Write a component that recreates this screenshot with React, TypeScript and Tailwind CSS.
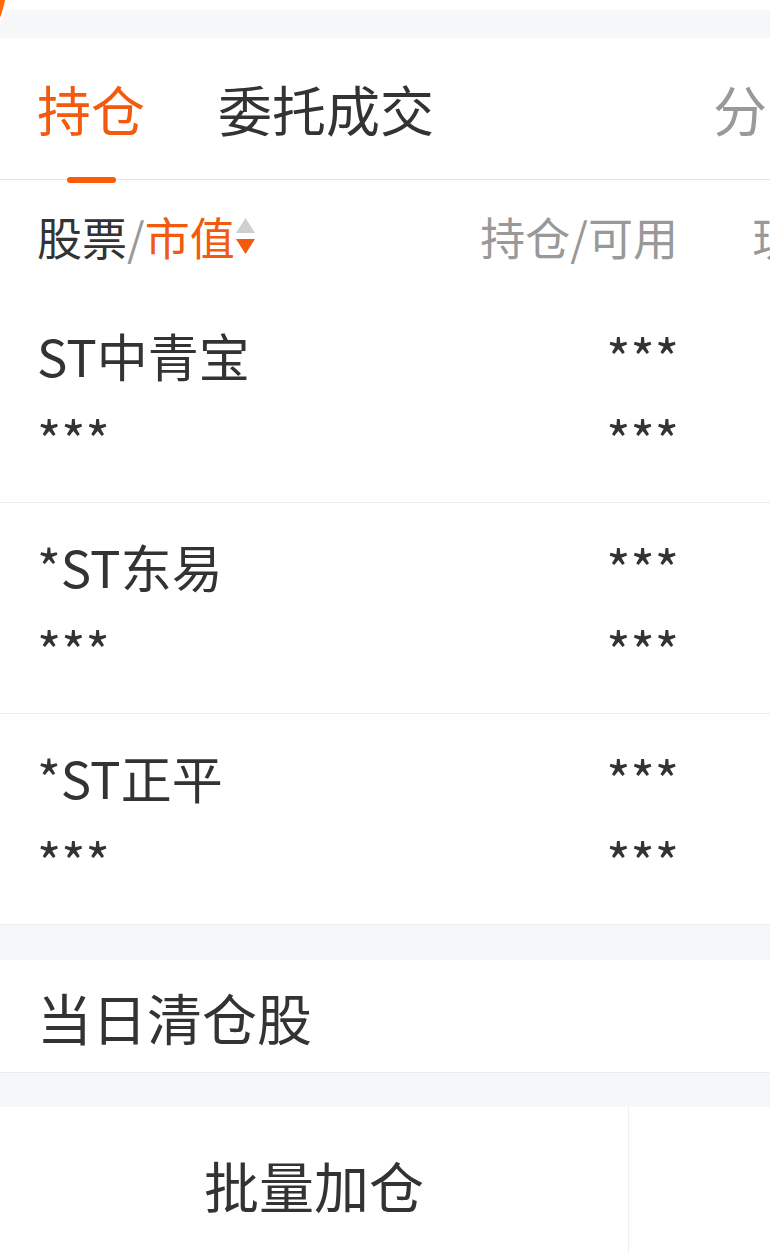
import React from 'react'

const rows = [
  { name: 'ST中青宝' },
  { name: '*ST东易' },
  { name: '*ST正平' },
]

const font = { fontFamily: '"Noto Sans CJK SC", "Noto Sans", sans-serif' }

export default function App() {
  return (
    <div className="relative w-[770px] h-[1253px] overflow-hidden bg-white text-[#333]" style={font}>
      {/* top strip */}
      <div className="h-[10px] bg-white" />
      <div className="h-[28px] bg-[#f6f7f9]" />
      <div className="absolute left-[-206px] top-[-128px] w-[216px] h-[216px] rounded-full bg-[#ff6a0a] border-[3px] border-white" />

      {/* tabs */}
      <div className="relative h-[142px] border-b border-[#e3e3e3] flex items-center pl-[37px] whitespace-nowrap">
        <div className="relative shrink-0 text-[54px] leading-none text-[#f25a0e]">
          持仓
          <span className="absolute left-[30px] top-[95px] w-[49px] h-[6px] rounded-full bg-[#ff5a0a]" />
        </div>
        <div className="shrink-0 ml-[73px] text-[54px] leading-none">委托成交</div>
        <div className="shrink-0 ml-[279px] text-[54px] leading-none text-[#999]">分时</div>
      </div>

      {/* column header */}
      <div className="h-[112px] flex items-center pl-[37px] whitespace-nowrap text-[45px] leading-none">
        <div className="w-[441px] shrink-0 flex items-center">
          <span>股票</span>
          <span className="text-[#999]">/</span>
          <span className="text-[#f25a0e]">市值</span>
          <span className="ml-[1px] shrink-0 flex flex-col gap-[6px]">
            <svg className="shrink-0" width="19" height="15" viewBox="0 0 19 15"><path d="M9.5 0L19 15H0z" fill="#cfcfcf" /></svg>
            <svg className="shrink-0" width="19" height="15" viewBox="0 0 19 15"><path d="M0 0h19L9.5 15z" fill="#f25a0e" /></svg>
          </span>
        </div>
        <div className="w-[200px] shrink-0 text-right text-[#999]">持仓/可用</div>
        <div className="shrink-0 ml-[74px] text-[#999]">现价/成本</div>
      </div>

      {/* holdings */}
      {rows.map((r, i) => (
        <div key={i} className="h-[211px] border-b border-[#ececec] flex pl-[37px] pt-[38px] whitespace-nowrap">
          <div className="w-[441px] shrink-0 flex flex-col">
            <div className="text-[51px] leading-none h-[50px]">{r.name}</div>
            <div className="mt-[32px] text-[52px] leading-none h-[50px]">***</div>
          </div>
          <div className="w-[201px] shrink-0 flex flex-col items-end">
            <div className="text-[52px] leading-none h-[50px]">***</div>
            <div className="mt-[32px] text-[52px] leading-none h-[50px]">***</div>
          </div>
          <div className="shrink-0 ml-[140px] flex flex-col">
            <div className="text-[52px] leading-none h-[50px]">***</div>
            <div className="mt-[32px] text-[52px] leading-none h-[50px]">***</div>
          </div>
        </div>
      ))}

      <div className="h-[35px] bg-[#f6f7f9]" />

      {/* cleared today */}
      <div className="h-[113px] border-b border-[#ececec] flex items-center pl-[37px] text-[55px] leading-none">
        当日清仓股
      </div>

      <div className="h-[34px] bg-[#f6f7f9]" />

      {/* bottom actions */}
      <div className="h-[146px] flex whitespace-nowrap">
        <div className="w-[629px] shrink-0 border-r border-[#f0f0f0] flex items-center justify-center pt-[8px] text-[55px] leading-none">
          批量加仓
        </div>
        <div className="w-[629px] shrink-0 flex items-center justify-center pt-[8px] text-[55px] leading-none">批量减仓</div>
      </div>
    </div>
  )
}
